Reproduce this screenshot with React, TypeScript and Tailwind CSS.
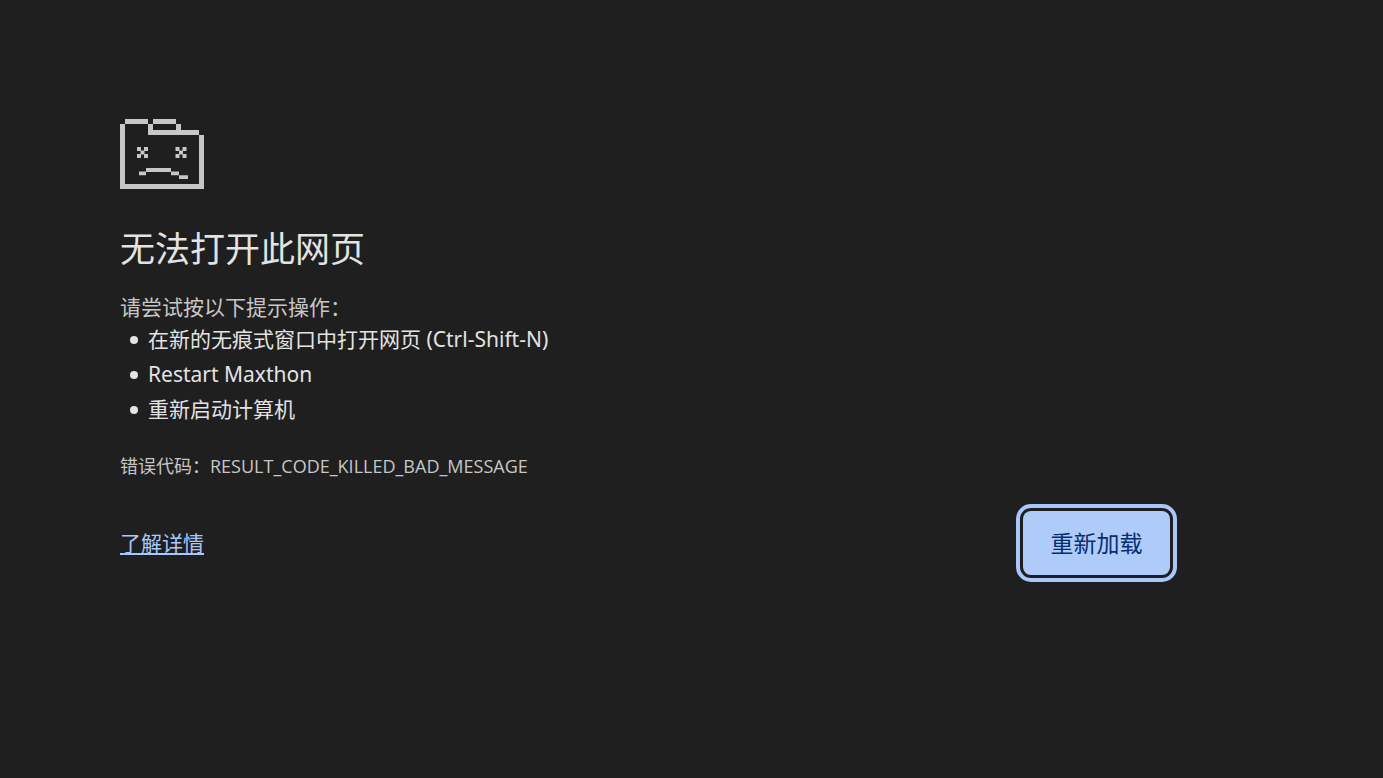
const TIPS = [
  "在新的无痕式窗口中打开网页 (Ctrl-Shift-N)",
  "Restart Maxthon",
  "重新启动计算机",
];

function SadFolderIcon() {
  return (
    <svg
      viewBox="0 0 84 70"
      className="h-[70px] w-[84px] fill-[#c7c7c7]"
      aria-hidden="true"
    >
      {/* folder outline */}
      <path d="M5 0H28V5H5ZM33 0H56V5H33ZM28 5H33V11H79V16H28ZM56 5H61V11H56ZM0 5H5V65H79V16H84V70H0Z" />
      {/* eyes */}
      <path d="M17 28h4v4h-4zM24 28h4v4h-4zM20.500 31.500h4v4h-4zM17 35h4v4h-4zM24 35h4v4h-4z" />
      <path d="M55.500 28h4v4h-4zM62.500 28h4v4h-4zM59 31.500h4v4h-4zM55.500 35h4v4h-4zM62.500 35h4v4h-4z" />
      {/* mouth */}
      <path d="M26 49H51V53H26ZM19 52.600H26V56.300H19ZM51 52.600H59V56.300H51ZM59 56.300H68V60H59Z" />
    </svg>
  );
}

export default function App() {
  return (
    <div className="min-h-screen bg-[#1f1f1f] px-[120px] pt-[119px] font-['Open_Sans','Noto_Sans_CJK_SC',sans-serif] text-[#c7c7c7]">
      <main className="max-w-[1050px]">
        <SadFolderIcon />
        <h1 className="mt-9 text-[35px] leading-[48px] text-[#e3e3e3]">
          无法打开此网页
        </h1>
        <p className="mt-[18px] text-[21px] leading-8">请尝试按以下提示操作：</p>
        <ul className="-mt-px pl-[10px] font-['Noto_Sans','Noto_Sans_CJK_SC',sans-serif] text-[21px] leading-[35px] text-[#e3e3e3]">
          {TIPS.map((tip) => (
            <li
              key={tip}
              className="flex items-center gap-[10px] before:size-2 before:rounded-full before:bg-[#e3e3e3]"
            >
              {tip}
            </li>
          ))}
        </ul>
        <p className="mt-[25px] text-[18px] leading-7">
          错误代码：RESULT_CODE_KILLED_BAD_MESSAGE
        </p>
        <div className="mt-[31px] flex items-center justify-between">
          <a
            href="#details"
            className="text-[21px] leading-8 text-[#a8c7fa] underline underline-offset-2"
          >
            了解详情
          </a>
          <button
            type="button"
            className="h-16 w-[147px] rounded-lg bg-[#aecbfa] text-[23px] leading-8 text-[#062e6f] outline-4 outline-offset-[3px] outline-[#a8c7fa]"
          >
            重新加载
          </button>
        </div>
      </main>
    </div>
  );
}
